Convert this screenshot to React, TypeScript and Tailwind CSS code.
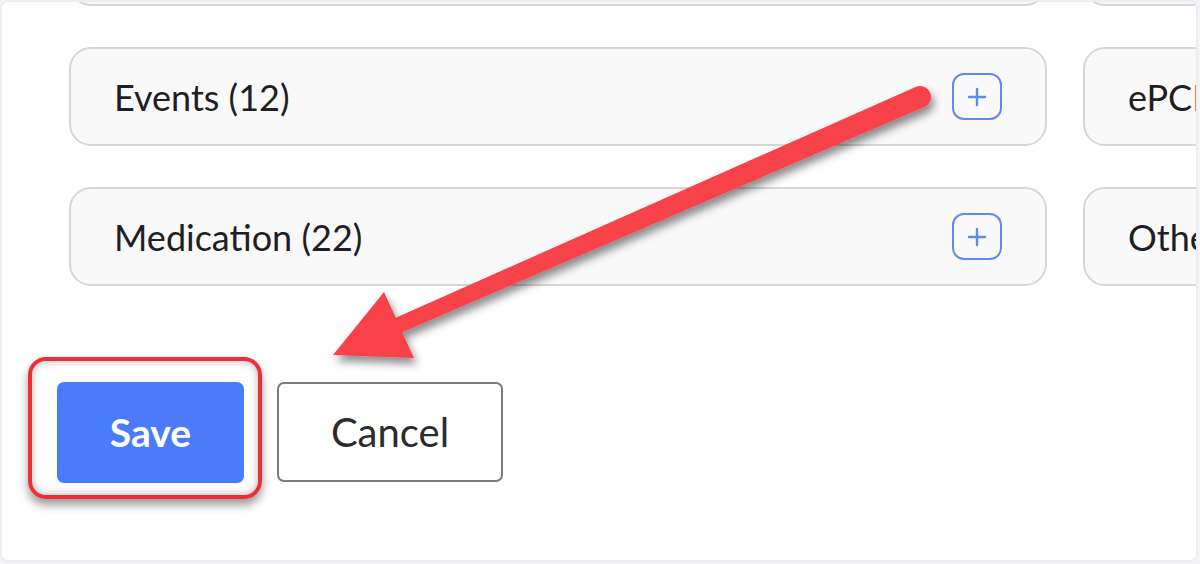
import React from "react";

const rows = [
  [{ label: "" }, { label: "" }],
  [{ label: "Events (12)" }, { label: "ePCR" }],
  [{ label: "Medication (22)" }, { label: "Other" }],
];

function PlusButton() {
  return (
    <div className="w-[50px] h-[47px] rounded-[12px] border-2 border-[#5b8def] flex items-center justify-center shrink-0">
      <svg width="20" height="20" viewBox="0 0 20 20">
        <path d="M10 2v16M2 10h16" stroke="#5b8def" strokeWidth="2.4" strokeLinecap="round" />
      </svg>
    </div>
  );
}

function Arrow() {
  return (
    <svg className="absolute inset-0 pointer-events-none" width="1200" height="564" viewBox="0 0 1200 564">
      <defs>
        <filter id="arrowShadow" x="-10%" y="-10%" width="130%" height="140%">
          <feDropShadow dx="3" dy="6" stdDeviation="4" floodColor="#000" floodOpacity="0.45" />
        </filter>
      </defs>
      <path
        d="M915.6 86.9 L395.8 317.7 L384 292 L333 355 L414 358 L402.2 332.3 L924.4 107.1 A11 11 0 0 0 915.6 86.9 Z"
        fill="#f7424a"
        filter="url(#arrowShadow)"
      />
    </svg>
  );
}

export default function App() {
  return (
    <div className="relative w-[1200px] h-[564px] overflow-hidden bg-[#f4f4f8] font-['Lato',sans-serif]">
      <div className="relative h-[562px] w-[1198px] bg-white border-2 border-[#ececf2] rounded-lg overflow-hidden">
        <div className="flex flex-col gap-[41px] mt-[-95px] pl-[67px]">
          {rows.map((row, i) => (
            <div key={i} className="flex gap-[36px]">
              {row.map((c, j) => (
                <div
                  key={j}
                  className="w-[978px] h-[99px] shrink-0 rounded-[22px] border-2 border-[#d6d6d6] bg-[#f9f9f9] flex items-center justify-between pl-[43px] pr-[43px]"
                >
                  <span className="text-[36px] text-[#1e1e24] leading-none whitespace-nowrap">{c.label}</span>
                  {j === 0 && c.label && <PlusButton />}
                </div>
              ))}
            </div>
          ))}
        </div>

        <div className="flex gap-[33px] pl-[55px] mt-[96px]">
          <button className="w-[187px] h-[101px] rounded-[7px] bg-[#4b7bfb] text-white text-[39px] font-bold">
            Save
          </button>
          <button className="w-[226px] h-[100px] rounded-[7px] border-2 border-[#7a7a7a] bg-white text-[#2a2a30] text-[40px]">
            Cancel
          </button>
        </div>
      </div>

      {/* highlight around Save */}
      <div className="absolute left-[28px] top-[357px] w-[234px] h-[142px] rounded-[18px] border-4 border-[#ee2e36] shadow-[0_6px_10px_rgba(0,0,0,0.4),inset_0_0_8px_rgba(0,0,0,0.3)]" />

      <Arrow />
    </div>
  );
}
